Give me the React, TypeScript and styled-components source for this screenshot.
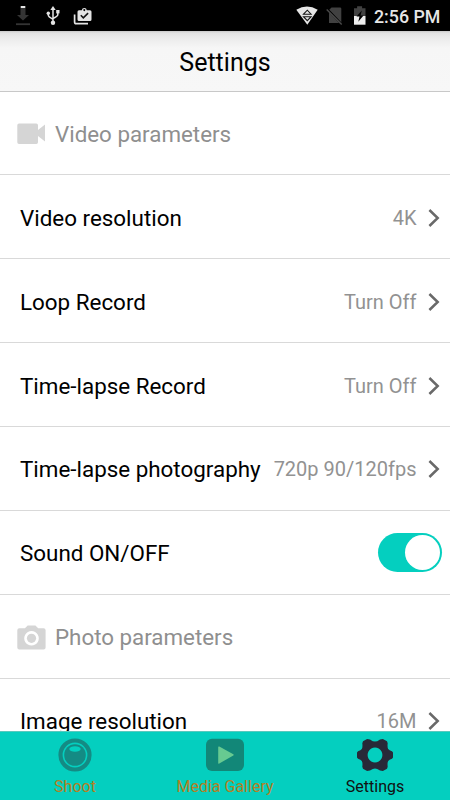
import React from "react";
import styled, { createGlobalStyle } from "styled-components";

const GlobalStyle = createGlobalStyle`
  * { box-sizing: border-box; }
  body { margin: 0; background: #fff; font-family: Roboto, "Liberation Sans", sans-serif; }
  svg { display: block; flex: none; }
`;

const Screen = styled.div`
  width: 450px;
  height: 800px;
  display: flex;
  flex-direction: column;
  overflow: hidden;
  background: #fff;
`;

const StatusBar = styled.div`
  height: 31px;
  flex: none;
  display: flex;
  justify-content: space-between;
  background: #000;
`;

const Clock = styled.span`
  width: 66px;
  margin-right: 10px;
  padding-top: 2px;
  font-size: 17.8px;
  line-height: 30px;
  font-weight: 500;
  color: #e6e6e6;
  white-space: nowrap;
`;

const StatusRight = styled.div`
  display: flex;
`;

const Header = styled.header`
  height: 61px;
  flex: none;
  display: flex;
  align-items: center;
  justify-content: center;
  padding-top: 2px;
  border-bottom: 1px solid #c8c8c8;
  background: linear-gradient(#c9c9c9 0, #e2e2e2 2px, #ebebeb 7px, #f6f6f6 17px, #f7f7f7 100%);
  font-size: 25px;
  color: #000;
`;

const List = styled.main`
  flex: 1;
  min-height: 0;
  overflow: hidden;
`;

const Row = styled.div`
  height: 83.9px;
  display: flex;
  align-items: center;
  padding: 2.1px 9px 0 20px;
  border-bottom: 1px solid #d9d9d9;
  white-space: nowrap;
`;

const SectionRow = styled(Row)<{ $first?: boolean }>`
  height: ${(p) => (p.$first ? "83.3px" : "83.9px")};
  padding-top: 2px;
  padding-left: 17px;
  gap: 9px;
  font-size: 22.35px;
  color: #8f8f8f;
`;

const Label = styled.span`
  flex: 1;
  font-size: 22.4px;
  color: #000;
`;

const Value = styled.span`
  margin-right: 10.5px;
  font-size: 20px;
  color: #929292;
`;

const Toggle = styled.div`
  width: 64px;
  height: 39px;
  margin: -1.2px -1px 0 0;
  padding: 2px 2.5px;
  display: flex;
  justify-content: flex-end;
  border-radius: 20px;
  background: #04cfbf;
`;

const Knob = styled.div`
  width: 35px;
  height: 35px;
  border-radius: 50%;
  background: #fff;
`;

const TabBar = styled.nav`
  height: 69px;
  flex: none;
  display: grid;
  grid-template-columns: repeat(3, 1fr);
  border-top: 1px solid #58c9bd;
  background: #04cfbf;
`;

const Tab = styled.div<{ $active?: boolean }>`
  display: flex;
  flex-direction: column;
  align-items: center;
  padding-top: 6px;
  font-size: 16px;
  line-height: 20px;
  gap: 5px;
  color: ${(p) => (p.$active ? "#111" : "#b48024")};
`;

const LeftIcons = () => (
  <svg width="110" height="31" viewBox="0 0 110 31">
    <g fill="#343434">
      <path d="M20.5 8h5v7h3.5l-6 5.5-6-5.5h3.5z" />
      <path d="M16 23.3h14v1.8H16z" />
      <path fill="#e4e4e4" d="M20.7 6h4.6v2h-4.6z" />
    </g>
    <g stroke="#e4e4e4" strokeWidth="1.5" fill="none">
      <path d="M53 9v13M48.3 13v2.3q0 1.5 4.7 4M57.8 11v3.8q0 1.5-4.8 3.7" />
    </g>
    <g fill="#e4e4e4">
      <path d="M53 6l2.7 4h-5.4z" />
      <circle cx="53" cy="22.8" r="2.2" />
      <circle cx="48.3" cy="13.3" r="1.7" />
      <path d="M56.2 10h3.3v3.4h-3.3z" />
      <path fillRule="evenodd" d="M79 10.3h2.8q.3-2.3 2.5-2.3t2.5 2.3H90q1.5 0 1.5 1.5v7.7q0 1.5-1.5 1.5H79q-1.5 0-1.5-1.5v-7.7q0-1.5 1.5-1.5zm5.3-1.2a1 1 0 1 0 .01 0z" />
    </g>
    <path d="M74.6 14.5V22q0 1.7 1.7 1.7H88" stroke="#e4e4e4" strokeWidth="1.7" fill="none" />
    <path d="M80.8 15.3l2.5 2.5 4.8-4.7" stroke="#111" strokeWidth="1.6" fill="none" />
  </svg>
);

const RightIcons = () => (
  <svg width="79" height="31" viewBox="295 0 79 31">
    <path d="M296.3 9.7Q307 3.5 317.7 9.7L307.3 24.7z" fill="#e6e6e6" />
    <path d="M303.5 14.2l3.8-4 3.8 4zM303.5 16.7h7.6l-3.8 4z" stroke="#151515" strokeWidth="1.1" fill="none" />
    <path d="M331.5 7.5H340q1.3 0 1.3 1.3V23H329V10z" fill="#414141" />
    <path d="M326.7 8.5l15 15.8" stroke="#000" strokeWidth="2" />
    <path d="M326.7 9.5l15 15" stroke="#4a4a4a" strokeWidth="1.4" />
    <path d="M354 8.2h3.1V6.3h5v1.9h3.4V16H354z" fill="#414141" />
    <path d="M354 16h11.5v8.7H354z" fill="#eee" />
    <path d="M361.8 10.5l-5.3 6.1h3l-1.2 5.2 5.2-6.4h-3z" fill="#000" />
  </svg>
);

const VideoIcon = () => (
  <svg width="29" height="22" viewBox="0 0 29 22">
    <path d="M2 .5h17.3Q21 .5 21 2.2v4.9L28 1.5v17L21 13v6.3q0 1.7-1.7 1.7H2Q.3 21 .3 19.3V2.2Q.3.5 2 .5z" fill="#d5d5d5" />
  </svg>
);

const CameraIcon = () => (
  <svg width="29" height="25" viewBox="0 0 29 25">
    <path
      fillRule="evenodd"
      d="M2.3 3.2h5.6L10.7.4h7.7l2.8 2.8h5.4q2 0 2 2v17.3q0 2-2 2H2.3q-2 0-2-2V5.2q0-2 2-2zM14.5 6a7.3 7.3 0 1 0 .01 0z"
      fill="#d5d5d5"
    />
    <circle cx="14.5" cy="13.3" r="4.6" fill="#d5d5d5" />
  </svg>
);

const Chevron = () => (
  <svg width="14" height="20" viewBox="0 0 14 20">
    <path d="M2.4 2l8.3 8-8.3 8" stroke="#696969" strokeWidth="2.5" fill="none" />
  </svg>
);

const ShootIcon = () => (
  <svg width="34" height="34" viewBox="0 0 34 34">
    <circle cx="17" cy="17" r="14.5" fill="none" stroke="#148b84" strokeWidth="4.2" />
    <circle cx="17" cy="17" r="10.8" fill="#148b84" />
    <ellipse cx="17" cy="11" rx="5.7" ry="2.8" fill="#04cfbf" />
  </svg>
);

const GalleryIcon = () => (
  <svg width="38" height="34" viewBox="0 0 38 34">
    <rect y=".7" width="38" height="32.3" rx="6" fill="#128778" />
    <path d="M12.2 9.2q0-1.2 1.1-.6l14 7.7q.8.6 0 1.1l-14 8.1q-1.1.6-1.1-.6z" fill="#67ca91" />
  </svg>
);

const GearIcon = () => (
  <svg width="38" height="34" viewBox="0 0 38 34">
    <path
      fillRule="evenodd"
      d="M11.1.9L14 1.4Q17 3.6 19 3.6T24 1.4L26.9.9 31 3.3 31.7 5.3Q31.2 9.5 32.2 11T36 13.2L37 14.4V19.6L36 20.8Q33.2 21.5 32.2 23T31.7 28.7L31 30.7 26.9 33.1 24 32.6Q21 30.4 19 30.4T14 32.6L11.1 33.1 7 30.7 6.3 28.7Q6.8 24.5 5.8 23T2 20.8L1 19.6V14.4L2 13.2Q4.8 12.5 5.8 11T6.3 5.3L7 3.3zM19 9.6a7.4 7.4 0 1 0 .01 0z"
      fill="#282938"
    />
  </svg>
);

const settings = [
  ["Video resolution", "4K"],
  ["Loop Record", "Turn Off"],
  ["Time-lapse Record", "Turn Off"],
  ["Time-lapse photography", "720p 90/120fps"],
];

const SettingRow = ({ label, value }: { label: string; value: string }) => (
  <Row>
    <Label>{label}</Label>
    <Value>{value}</Value>
    <Chevron />
  </Row>
);

export default function App() {
  return (
    <>
      <GlobalStyle />
      <Screen>
        <StatusBar>
          <LeftIcons />
          <StatusRight>
            <RightIcons />
            <Clock>2:56 PM</Clock>
          </StatusRight>
        </StatusBar>
        <Header>Settings</Header>
        <List>
          <SectionRow $first>
            <VideoIcon />
            Video parameters
          </SectionRow>
          {settings.map(([label, value]) => (
            <SettingRow key={label} label={label} value={value} />
          ))}
          <Row>
            <Label>Sound ON/OFF</Label>
            <Toggle>
              <Knob />
            </Toggle>
          </Row>
          <SectionRow>
            <CameraIcon />
            Photo parameters
          </SectionRow>
          <SettingRow label="Image resolution" value="16M" />
        </List>
        <TabBar>
          <Tab>
            <ShootIcon />
            Shoot
          </Tab>
          <Tab>
            <GalleryIcon />
            Media Gallery
          </Tab>
          <Tab $active>
            <GearIcon />
            Settings
          </Tab>
        </TabBar>
      </Screen>
    </>
  );
}
